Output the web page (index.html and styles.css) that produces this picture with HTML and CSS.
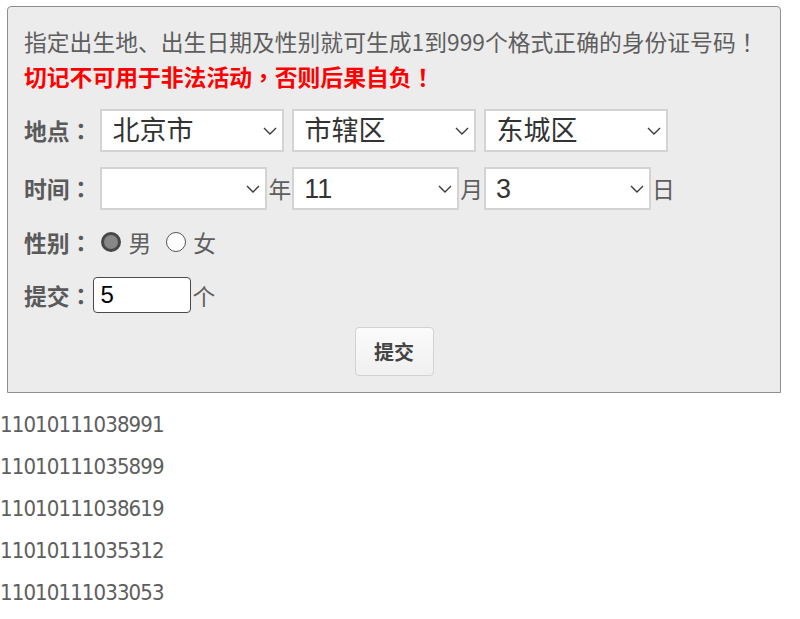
FILE: index.html
```html
<!DOCTYPE html>
<html lang="zh-CN">
<head>
<meta charset="utf-8">
<title>身份证号码生成</title>
<link rel="stylesheet" href="styles.css">
</head>
<body>
<div class="panel">
  <p class="intro">指定出生地、出生日期及性别就可生成1到999个格式正确的身份证号码<span class="punct" lang="zh-TW">！</span></p>
  <p class="warn">切记不可用于非法活动<span class="punct" lang="zh-TW">，</span>否则后果自负<span class="punct" lang="zh-TW">！</span></p>

  <div class="row row-select">
    <span class="label">地点<span class="punct" lang="zh-TW">：</span></span>
    <div class="sel sel-place">
      <select><option>北京市</option></select>
      <svg class="chev" width="14" height="8" viewBox="0 0 14 8"><path d="M1 1 L7 7 L13 1" /></svg>
    </div>
    <div class="sel sel-place">
      <select><option>市辖区</option></select>
      <svg class="chev" width="14" height="8" viewBox="0 0 14 8"><path d="M1 1 L7 7 L13 1" /></svg>
    </div>
    <div class="sel sel-place">
      <select><option>东城区</option></select>
      <svg class="chev" width="14" height="8" viewBox="0 0 14 8"><path d="M1 1 L7 7 L13 1" /></svg>
    </div>
  </div>

  <div class="row row-select row-date">
    <span class="label">时间<span class="punct" lang="zh-TW">：</span></span>
    <div class="sel sel-date sel-first">
      <select><option></option></select>
      <svg class="chev" width="14" height="8" viewBox="0 0 14 8"><path d="M1 1 L7 7 L13 1" /></svg>
    </div>
    <span class="unit">年</span>
    <div class="sel sel-date">
      <select><option>11</option></select>
      <svg class="chev" width="14" height="8" viewBox="0 0 14 8"><path d="M1 1 L7 7 L13 1" /></svg>
    </div>
    <span class="unit">月</span>
    <div class="sel sel-date">
      <select><option>3</option></select>
      <svg class="chev" width="14" height="8" viewBox="0 0 14 8"><path d="M1 1 L7 7 L13 1" /></svg>
    </div>
    <span class="unit">日</span>
  </div>

  <div class="row row-sex">
    <span class="label">性别<span class="punct" lang="zh-TW">：</span></span>
    <input class="radio radio-male" type="radio" name="sex" checked>
    <span class="opt">男</span>
    <input class="radio radio-female" type="radio" name="sex">
    <span class="opt">女</span>
  </div>

  <div class="row row-count">
    <span class="label">提交<span class="punct" lang="zh-TW">：</span></span>
    <input class="count" type="text" value="5">
    <span class="unit">个</span>
  </div>

  <div class="actions">
    <button class="submit" type="button">提交</button>
  </div>
</div>

<div class="results">
  <div class="num">11010111038991</div>
  <div class="num">11010111035899</div>
  <div class="num">11010111038619</div>
  <div class="num">11010111035312</div>
  <div class="num">11010111033053</div>
</div>
</body>
</html>
```

FILE: styles.css
```css
* {
  box-sizing: border-box;
}

html, body {
  margin: 0;
  padding: 0;
  background: #ffffff;
}

body {
  font-family: "Noto Sans CJK SC", "Noto Sans", sans-serif;
  color: #5e5e5e;
  font-size: 22.8px;
  text-spacing-trim: space-all;
}

.punct {
  font-family: "Noto Sans CJK TC", "Noto Sans CJK SC", sans-serif;
}

.panel {
  margin: 6px 0 0 7px;
  width: 774px;
  background: #ececec;
  border: 1px solid #8f8f8f;
  border-radius: 4px 4px 0 0;
  padding: 17px 16px 16px 16px;
}

.intro,
.warn {
  margin: 0;
  line-height: 35px;
  white-space: nowrap;
}

.warn {
  color: #ff0000;
  font-weight: bold;
}

.row {
  display: flex;
  align-items: center;
}

.label {
  font-weight: bold;
  color: #5a5a5a;
  flex: none;
  white-space: nowrap;
}

.row-select {
  margin-top: 15px;
  height: 43px;
}

.row-date {
  margin-top: 15px;
}

.sel {
  position: relative;
  height: 43px;
  flex: none;
}

.sel-place {
  width: 184px;
  margin-left: 8px;
}

.sel-date {
  width: 167px;
  margin-left: 1px;
}

.sel-first {
  margin-left: 8px;
}

.sel select {
  appearance: none;
  -webkit-appearance: none;
  width: 100%;
  height: 100%;
  margin: 0;
  border: 2px solid #d3d3d3;
  border-radius: 0;
  background: #ffffff;
  color: #333333;
  font-family: "Liberation Sans", "Noto Sans CJK SC", sans-serif;
  font-size: 27px;
  padding: 0 30px 0 10px;
  outline: none;
}

.chev {
  position: absolute;
  right: 7px;
  top: 18px;
  pointer-events: none;
}

.chev path {
  fill: none;
  stroke: #3a3a3a;
  stroke-width: 1.4;
}

.unit {
  flex: none;
  margin-left: 1px;
  color: #5e5e5e;
}

.row-sex {
  margin-top: 17px;
  height: 30px;
}

.radio {
  appearance: none;
  -webkit-appearance: none;
  width: 20px;
  height: 20px;
  margin: 0;
  border-radius: 50%;
  border: 1px solid #555555;
  background: #ffffff;
  flex: none;
}

.radio:checked {
  border: 3px solid #474747;
  background: #878787;
}

.radio-male {
  margin-left: 9px;
}

.radio-female {
  margin-left: 15px;
}

.opt {
  margin-left: 7px;
  color: #5e5e5e;
}

.row-count {
  margin-top: 20px;
  height: 36px;
}

.count {
  width: 98px;
  height: 36px;
  margin: 0 0 0 1px;
  border: 1px solid #4a4a4a;
  border-radius: 4px;
  background: #ffffff;
  color: #000000;
  font-family: "Liberation Sans", sans-serif;
  font-size: 24px;
  padding: 0 6px;
  outline: none;
}

.actions {
  display: flex;
  justify-content: center;
  margin-top: 14px;
}

.submit {
  width: 79px;
  height: 49px;
  border: 1px solid #d2d2d2;
  border-radius: 4px;
  background: linear-gradient(#fbfbfb, #f0f0f0);
  color: #444444;
  font-family: "Noto Sans CJK SC", sans-serif;
  font-weight: bold;
  font-size: 20px;
  padding: 0;
}

.results {
  padding-top: 11px;
}

.num {
  font-family: "DejaVu Sans Condensed", "DejaVu Sans", sans-serif;
  font-stretch: condensed;
  font-size: 22px;
  letter-spacing: -0.9px;
  line-height: 42px;
  color: #5e5e5e;
}
```
